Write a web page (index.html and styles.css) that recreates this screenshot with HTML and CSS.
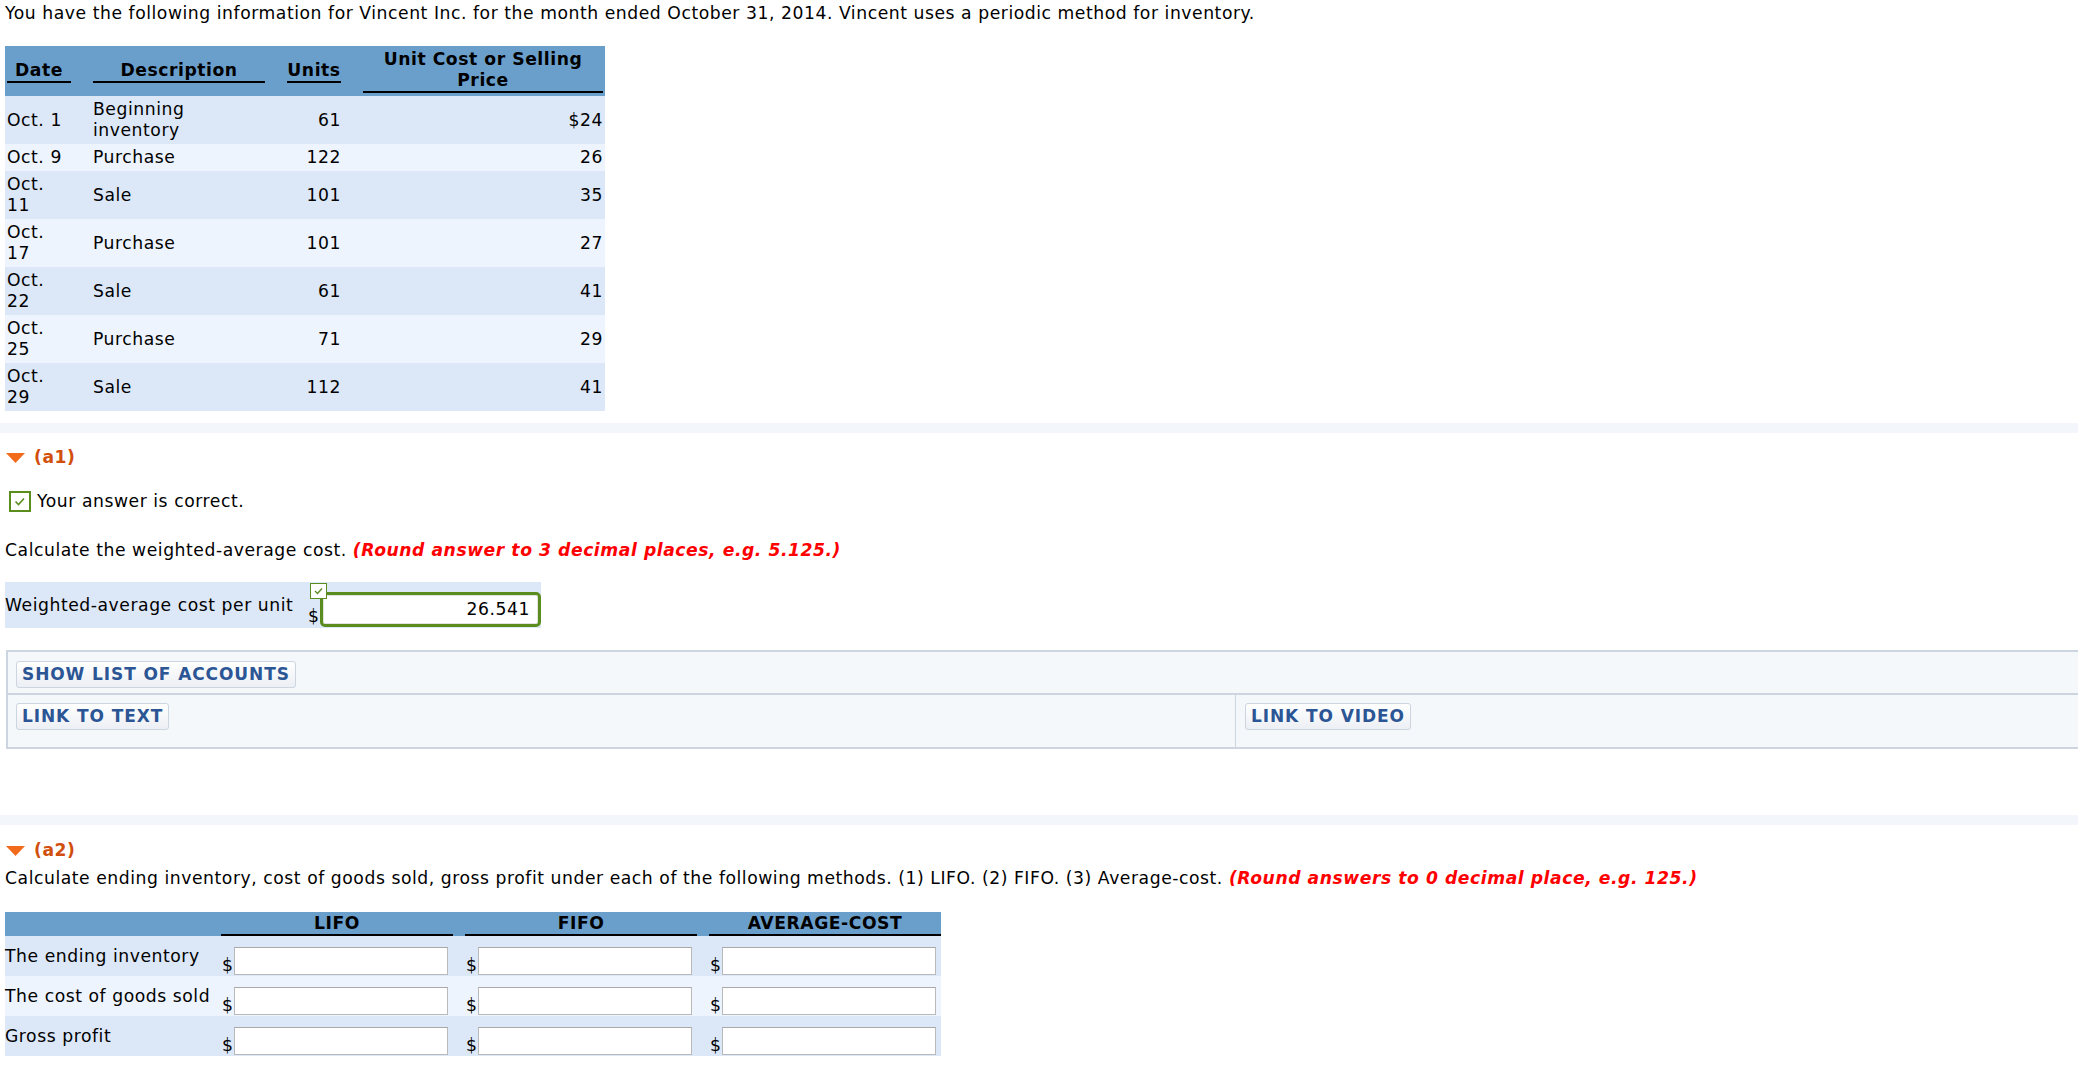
FILE: index.html
```html
<!DOCTYPE html>
<html>
<head>
<meta charset="utf-8">
<title>Vincent Inc.</title>
<link rel="stylesheet" href="styles.css">
</head>
<body>
<p class="intro">You have the following information for Vincent Inc. for the month ended October 31, 2014. Vincent uses a periodic method for inventory.</p>

<div class="data-table">
  <div class="drow head">
    <div class="hcell">Date</div>
    <div class="hcell">Description</div>
    <div class="hcell">Units</div>
    <div class="hcell">Unit Cost or Selling<br>Price</div>
  </div>
  <div class="drow dark">
    <div>Oct. 1</div><div>Beginning<br>inventory</div><div class="num">61</div><div class="num">$24</div>
  </div>
  <div class="drow light">
    <div>Oct. 9</div><div>Purchase</div><div class="num">122</div><div class="num">26</div>
  </div>
  <div class="drow dark">
    <div>Oct.<br>11</div><div>Sale</div><div class="num">101</div><div class="num">35</div>
  </div>
  <div class="drow light">
    <div>Oct.<br>17</div><div>Purchase</div><div class="num">101</div><div class="num">27</div>
  </div>
  <div class="drow dark">
    <div>Oct.<br>22</div><div>Sale</div><div class="num">61</div><div class="num">41</div>
  </div>
  <div class="drow light">
    <div>Oct.<br>25</div><div>Purchase</div><div class="num">71</div><div class="num">29</div>
  </div>
  <div class="drow dark">
    <div>Oct.<br>29</div><div>Sale</div><div class="num">112</div><div class="num">41</div>
  </div>
</div>

<div class="band band-a1"></div>

<div class="part-title title-a1">
  <svg class="tri" width="19" height="10" viewBox="0 0 19 10"><polygon points="0,0 19,0 9.5,10" fill="#f26b1d"/></svg>
  <span>(a1)</span>
</div>

<div class="correct">
  <svg class="check" width="22" height="21" viewBox="0 0 22 21"><rect x="1" y="1" width="20" height="19" fill="#fff" stroke="#5b8c1e" stroke-width="2"/><polyline points="6.5,10.5 9.5,13.5 15,7.5" fill="none" stroke="#5b8c1e" stroke-width="1.6"/></svg>
  <span>Your answer is correct.</span>
</div>

<p class="question q-a1">Calculate the weighted-average cost. <em class="hint">(Round answer to 3 decimal places, e.g. 5.125.)</em></p>

<div class="answer-band">
  <div class="answer-label">Weighted-average cost per unit</div>
  <div class="answer-field">
    <span class="dollar">$</span>
    <div class="green-input">26.541</div>
    <svg class="mini-check" width="17" height="16" viewBox="0 0 17 16"><rect x="0.5" y="0.5" width="16" height="15" fill="#fff" stroke="#5b8c1e" stroke-width="1"/><polyline points="5,8 7.5,10.5 12,5.5" fill="none" stroke="#5b8c1e" stroke-width="1.3"/></svg>
  </div>
</div>

<div class="panel">
  <div class="panel-row first">
    <span class="btn">SHOW LIST OF ACCOUNTS</span>
  </div>
  <div class="panel-row second">
    <div class="panel-cell left"><span class="btn">LINK TO TEXT</span></div>
    <div class="panel-cell right"><span class="btn">LINK TO VIDEO</span></div>
  </div>
</div>

<div class="band band-a2"></div>

<div class="part-title title-a2">
  <svg class="tri" width="19" height="10" viewBox="0 0 19 10"><polygon points="0,0 19,0 9.5,10" fill="#f26b1d"/></svg>
  <span>(a2)</span>
</div>

<p class="question q-a2">Calculate ending inventory, cost of goods sold, gross profit under each of the following methods. (1) LIFO. (2) FIFO. (3) Average-cost. <em class="hint">(Round answers to 0 decimal place, e.g. 125.)</em></p>

<div class="method-table">
  <div class="mrow mhead">
    <div></div>
    <div class="mh">LIFO</div>
    <div class="mh">FIFO</div>
    <div class="mh">AVERAGE-COST</div>
  </div>
  <div class="mrow dark">
    <div class="mlabel">The ending inventory</div>
    <div class="mcell"><span class="dollar">$</span><span class="box"></span></div>
    <div class="mcell"><span class="dollar">$</span><span class="box"></span></div>
    <div class="mcell"><span class="dollar">$</span><span class="box"></span></div>
  </div>
  <div class="mrow light">
    <div class="mlabel">The cost of goods sold</div>
    <div class="mcell"><span class="dollar">$</span><span class="box"></span></div>
    <div class="mcell"><span class="dollar">$</span><span class="box"></span></div>
    <div class="mcell"><span class="dollar">$</span><span class="box"></span></div>
  </div>
  <div class="mrow dark">
    <div class="mlabel">Gross profit</div>
    <div class="mcell"><span class="dollar">$</span><span class="box"></span></div>
    <div class="mcell"><span class="dollar">$</span><span class="box"></span></div>
    <div class="mcell"><span class="dollar">$</span><span class="box"></span></div>
  </div>
</div>
</body>
</html>
```

FILE: styles.css
```css
* { box-sizing: border-box; }
html, body { margin: 0; padding: 0; }
body {
  font-family: "DejaVu Sans", Verdana, sans-serif;
  font-size: 17.2px;
  line-height: 21px;
  letter-spacing: 0.55px;
  color: #000;
  background: #fff;
  overflow: hidden;
}

.intro { margin: 0; padding: 3px 5px 0; }

/* first data table */
.data-table { margin: 22px 0 0 5px; width: 600px; }
.drow {
  display: grid;
  grid-template-columns: 64px 172px 54px 240px;
  column-gap: 22px;
  padding: 3px 2px;
  align-items: center;
}
.drow.head { background: #6a9fcc; height: 50px; padding: 0 2px; }
.hcell { font-weight: bold; text-align: center; border-bottom: 2px solid #000; white-space: nowrap; }
.dark { background: #dce8f8; }
.light { background: #edf4fe; }
.num { text-align: right; }

.band { height: 10px; background: #f3f6fa; }
.band-a1 { margin-top: 12px; }
.band-a2 { margin-top: 66px; }

.part-title { display: flex; align-items: center; gap: 9px; padding-left: 6px; color: #d24e0c; font-weight: bold; }
.title-a1 { margin-top: 14px; }
.title-a2 { margin-top: 15px; }

.correct { display: flex; align-items: center; gap: 6px; margin-top: 23px; padding-left: 9px; }
.check { display: block; }

.question { margin: 0; padding-left: 5px; white-space: nowrap; }
.q-a1 { margin-top: 28px; }
.q-a2 { margin-top: 7px; }
.hint { color: #ff0000; font-weight: bold; font-style: italic; }

.answer-band {
  position: relative;
  margin: 21px 0 0 5px;
  width: 536px;
  height: 46px;
  background: #dce8f8;
  display: flex;
  align-items: flex-end;
}
.answer-label { width: 303px; align-self: center; white-space: nowrap; }
.answer-field { display: flex; align-items: flex-end; padding-bottom: 1px; }
.dollar { display: block; line-height: 21px; width: 12px; }
.green-input {
  width: 221px;
  height: 35px;
  border: 3px solid #5b8c1e;
  border-radius: 5px;
  background: #fff;
  box-shadow: inset 0 0 0 1px #e2e2e2;
  text-align: right;
  padding: 2px 8px 0 0;
  line-height: 24px;
}
.mini-check { position: absolute; left: 305px; top: 1px; }

.panel {
  margin: 22px 0 0 6px;
  border: 2px solid #ccd5e0;
  border-right: none;
  background: #f5f8fb;
}
.panel-row.first { height: 41px; padding: 9px 0 0 8px; }
.panel-row.second { display: flex; border-top: 2px solid #ccd5e0; height: 54px; }
.panel-cell { padding-top: 8px; }
.panel-cell.left { width: 1228px; padding-left: 8px; border-right: 1px solid #ccd5e0; }
.panel-cell.right { padding-left: 9px; }
.btn {
  display: inline-block;
  height: 27px;
  padding: 0 5px;
  line-height: 25px;
  font-weight: bold;
  font-size: 17px;
  letter-spacing: 0.9px;
  color: #2b5594;
  border: 1px solid #cdd5e0;
  border-radius: 3px;
  background: linear-gradient(#ffffff, #eceff4);
}

/* methods table */
.method-table { margin: 23px 0 0 5px; width: 936px; }
.mrow {
  display: grid;
  grid-template-columns: 204px 232px 232px 232px;
  column-gap: 12px;
}
.mhead { background: #6a9fcc; height: 24px; padding-top: 1px; }
.mh { font-weight: bold; text-align: center; border-bottom: 2px solid #000; height: 23px; }
.mrow.dark, .mrow.light { height: 40px; }
.mlabel { padding-top: 10px; white-space: nowrap; }
.mcell { display: flex; align-items: flex-end; padding-bottom: 1px; }
.mcell .dollar { width: 13px; padding-left: 1px; line-height: 19px; }
.box {
  display: block;
  width: 214px;
  height: 28px;
  background: #fff;
  border: 1px solid #b9b9b9;
  border-top-color: #a9a9a9;
}
```
